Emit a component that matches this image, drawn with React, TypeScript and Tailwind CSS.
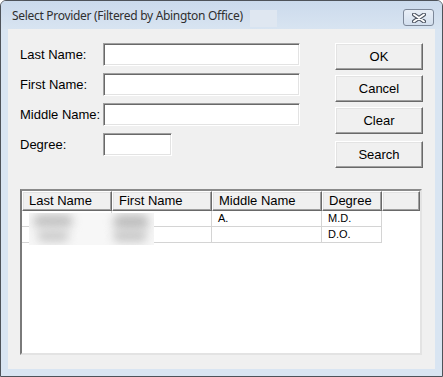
import React from "react";

const SUNKEN =
  "border border-t-[#a0a0a0] border-l-[#a0a0a0] border-b-white border-r-white shadow-[inset_1px_1px_0_#696969,inset_-1px_-1px_0_#e3e3e3]";

const RAISED =
  "border border-t-white border-l-white border-b-[#696969] border-r-[#696969] shadow-[inset_-1px_-1px_0_#a0a0a0,inset_1px_1px_0_#e3e3e3]";

const fields = [
  { label: "Last Name:", width: "w-[197px]" },
  { label: "First Name:", width: "w-[197px]" },
  { label: "Middle Name:", width: "w-[197px]" },
  { label: "Degree:", width: "w-[69px]" },
];

const columns = [
  { title: "Last Name", width: "w-[90px]" },
  { title: "First Name", width: "w-[100px]" },
  { title: "Middle Name", width: "w-[110px]" },
  { title: "Degree", width: "w-[60px]" },
];

const rows = [
  ["", "", "A.", "M.D."],
  ["", "", "", "D.O."],
];

function WinButton({ text, className = "" }: { text: string; className?: string }) {
  return (
    <button
      type="button"
      className={`flex h-[27px] w-[88px] items-center justify-center bg-[#f0f0f0] text-[13px] text-black ${RAISED} ${className}`}
    >
      {text}
    </button>
  );
}

export default function App() {
  return (
    <div className="h-[377px] w-[443px] bg-white font-['Liberation_Sans',Arial,sans-serif]">
      <div className="flex h-[377px] w-[443px] flex-col rounded-t-[6px] border border-[#4e535a] bg-[#d9e5f2]">
        {/* title bar */}
        <div className="flex h-[28px] shrink-0 items-start rounded-t-[5px] bg-gradient-to-b from-[#cbdaec] to-[#d8e4f1] pl-[11px] pr-[8px]">
          <span className="mt-[7px] font-['Noto_Sans',sans-serif] text-[12px] leading-[16px] tracking-[-0.3px] text-[#2f2f2f]">
            Select Provider (Filtered by Abington Office)
          </span>
          <span className="ml-[7px] mt-[9px] h-[17px] w-[27px] bg-[#dfe7f1]" />
          <button
            type="button"
            className="ml-auto mt-[8px] flex h-[17px] w-[31px] items-center justify-center rounded-[3px] border border-[#7d8899] bg-gradient-to-b from-[#e9eff7] to-[#d3dfee]"
          >
            <svg width="14" height="10" viewBox="0 0 14 10">
              <path d="M2 1.5 L12 8.5 M12 1.5 L2 8.5" stroke="#4a5260" strokeWidth="4" strokeLinecap="round" />
              <path d="M2 1.5 L12 8.5 M12 1.5 L2 8.5" stroke="#ffffff" strokeWidth="2" strokeLinecap="round" />
            </svg>
          </button>
        </div>

        {/* client area */}
        <div className="mx-[7px] mb-[7px] flex flex-1 flex-col bg-[#f0f0f0] pl-[12px] pt-[14px]">
          <div className="flex">
            <div className="flex w-[280px] flex-col gap-[7px]">
              {fields.map((f) => (
                <div key={f.label} className="flex h-[23px] items-center">
                  <span className="w-[83px] text-[13px] text-black">{f.label}</span>
                  <div className={`h-[23px] bg-white ${f.width} ${SUNKEN}`} />
                </div>
              ))}
            </div>
            <div className="ml-[35px] flex flex-col">
              <WinButton text="OK" />
              <WinButton text="Cancel" className="mt-[5px]" />
              <WinButton text="Clear" className="mt-[5px]" />
              <WinButton text="Search" className="mt-[7px]" />
            </div>
          </div>

          {/* list view */}
          <div className="mt-[21px] h-[166px] w-[402px] border-2 border-t-[#8a8a8a] border-l-[#7a7a7a] border-b-[#e3e3e3] border-r-[#e3e3e3] bg-white">
            <div className="relative">
              <div className="flex h-[20px]">
                {columns.map((c) => (
                  <div
                    key={c.title}
                    className={`flex h-[20px] shrink-0 items-center bg-[#f0f0f0] pl-[6px] text-[13px] text-black ${c.width} ${RAISED}`}
                  >
                    {c.title}
                  </div>
                ))}
                <div className={`h-[20px] flex-1 bg-[#f0f0f0] ${RAISED}`} />
              </div>
              {rows.map((r, i) => (
                <div key={i} className="flex h-[16px] w-[360px] border-b border-[#d4d4d4]">
                  {r.map((cell, j) => (
                    <div
                      key={j}
                      className={`flex shrink-0 items-center border-r border-[#d4d4d4] pl-[6px] text-[11px] text-black ${columns[j].width}`}
                    >
                      {cell}
                    </div>
                  ))}
                </div>
              ))}
              {/* redacted names */}
              <div className="absolute left-[7px] top-[22px] h-[32px] w-[125px] overflow-hidden bg-[#f7f7f7]">
                <div className="absolute left-[4px] top-[1px] h-[14px] w-[40px] rounded-full bg-[#c4c4c4] blur-[5px]" />
                <div className="absolute left-[84px] top-[1px] h-[16px] w-[36px] rounded-full bg-[#c0c0c0] blur-[5px]" />
                <div className="absolute left-[8px] top-[17px] h-[12px] w-[32px] rounded-full bg-[#cccccc] blur-[5px]" />
                <div className="absolute left-[84px] top-[17px] h-[12px] w-[34px] rounded-full bg-[#c8c8c8] blur-[5px]" />
              </div>
            </div>
          </div>
        </div>
      </div>
    </div>
  );
}
